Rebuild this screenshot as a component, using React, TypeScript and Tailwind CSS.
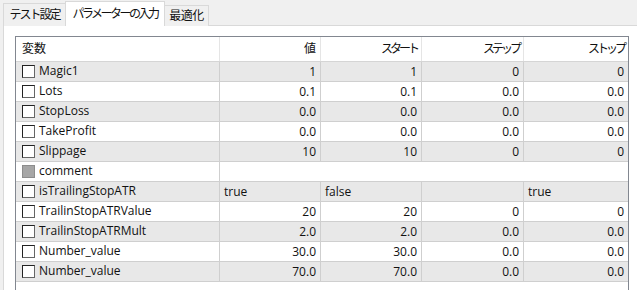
import React from 'react';

type Row = {
  name: string;
  vals?: string[];
  left?: boolean;
  disabled?: boolean;
};

const rows: Row[] = [
  { name: 'Magic1', vals: ['1', '1', '0', '0'] },
  { name: 'Lots', vals: ['0.1', '0.1', '0.0', '0.0'] },
  { name: 'StopLoss', vals: ['0.0', '0.0', '0.0', '0.0'] },
  { name: 'TakeProfit', vals: ['0.0', '0.0', '0.0', '0.0'] },
  { name: 'Slippage', vals: ['10', '10', '0', '0'] },
  { name: 'comment', disabled: true },
  { name: 'isTrailingStopATR', vals: ['true', 'false', '', 'true'], left: true },
  { name: 'TrailinStopATRValue', vals: ['20', '20', '0', '0'] },
  { name: 'TrailinStopATRMult', vals: ['2.0', '2.0', '0.0', '0.0'] },
  { name: 'Number_value', vals: ['30.0', '30.0', '0.0', '0.0'] },
  { name: 'Number_value', vals: ['70.0', '70.0', '0.0', '0.0'] },
];

const cols = 'grid grid-cols-[204px_101px_101px_102px_104px]';

function Checkbox({ disabled }: { disabled?: boolean }) {
  if (disabled) {
    return <span className="w-[13px] h-[13px] shrink-0 border border-[#8c8c8c] bg-[#a6a6a6]" />;
  }
  return (
    <span className="w-[13px] h-[13px] shrink-0 border border-t-[#222] border-l-[#222] border-r-[#666] border-b-[#666] bg-white" />
  );
}

export default function App() {
  return (
    <div
      className="w-[637px] h-[290px] overflow-hidden bg-[#f0f0f0] text-[12px] text-[#111]"
      style={{ fontFamily: '"Open Sans", "Noto Sans CJK JP", sans-serif' }}
    >
      {/* tabs */}
      <div className="flex items-end h-[25px] pl-[3px] relative z-10">
        <div className="w-[63px] h-[23px] flex items-center justify-center border border-b-0 border-[#d9d9d9] bg-[#f0f0f0] -mb-px tracking-[-2px]">
          テスト設定
        </div>
        <div className="w-[100px] h-[25px] flex items-center justify-center border border-b-0 border-[#d9d9d9] bg-white -ml-px -mb-px tracking-[-2.5px]">
          パラメーターの入力
        </div>
        <div className="w-[45px] h-[21px] flex items-center justify-center border border-b-0 border-[#d9d9d9] bg-[#f0f0f0] -ml-px -mb-px tracking-[-0.5px]">
          最適化
        </div>
      </div>

      {/* pane */}
      <div className="ml-[3px] h-[266px] border-l border-t border-[#d9d9d9] bg-white pt-[10px] pl-[11px]">
        <div className="w-[614px] h-[260px] border-l border-t border-r border-[#828790]">
          <div className={cols + ' h-[25px] border-b border-[#d5d5d5]'}>
            <div className="flex items-center pl-[6px] border-r border-[#e5e5e5]">変数</div>
            <div className="flex items-center justify-end pr-[4px] border-r border-[#e5e5e5]">値</div>
            <div className="flex items-center justify-end pr-[4px] border-r border-[#e5e5e5] tracking-[-3px]">スタート</div>
            <div className="flex items-center justify-end pr-[4px] border-r border-[#e5e5e5] tracking-[-3px]">ステップ</div>
            <div className="flex items-center justify-end pr-[4px] tracking-[-3px]">ストップ</div>
          </div>
          {rows.map((r, i) => (
            <div
              key={i}
              className={
                cols +
                ' h-[20px] border-b border-[#cfcfcf] ' +
                (i % 2 === 0 ? 'bg-[#e8e8e8]' : 'bg-white')
              }
            >
              <div className="flex items-center gap-[4px] pl-[6px] border-r border-[#cfcfcf]">
                <Checkbox disabled={r.disabled} />
                <span className="leading-none pb-px">{r.name}</span>
              </div>
              {r.vals ? (
                r.vals.map((v, j) => (
                  <div
                    key={j}
                    className={
                      'flex items-center ' +
                      (r.left ? 'pl-[4px] ' : 'justify-end pr-[4px] ') +
                      (j < 3 ? 'border-r border-[#cfcfcf]' : '')
                    }
                  >
                    {v}
                  </div>
                ))
              ) : (
                <div className="col-span-4" />
              )}
            </div>
          ))}
        </div>
      </div>
    </div>
  );
}
